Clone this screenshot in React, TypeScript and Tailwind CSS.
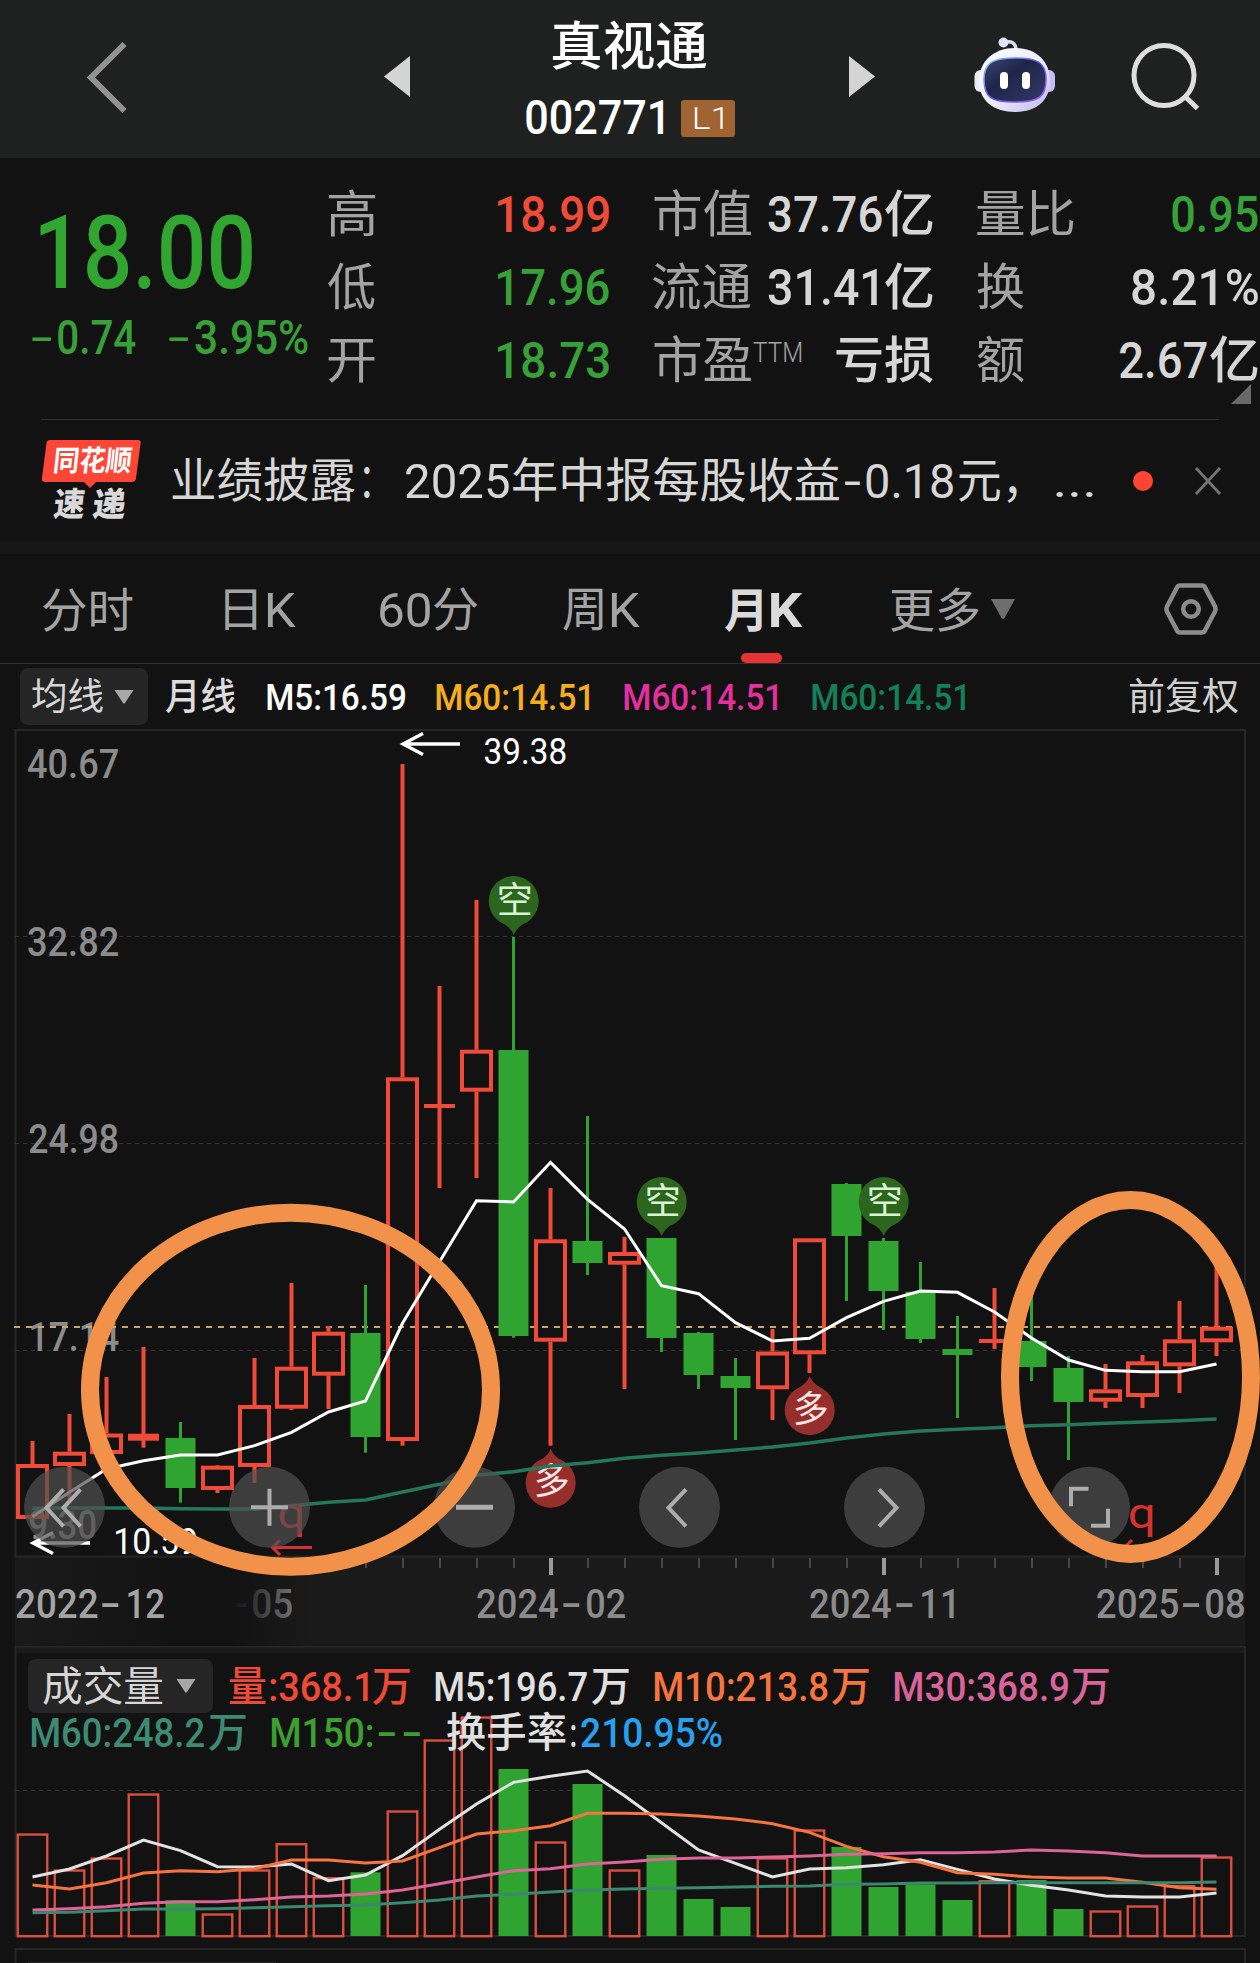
import { useLayoutEffect, useRef, useState, type ReactNode } from "react";

const FAMILY = 'Roboto, "Noto Sans CJK SC", sans-serif';
const RED = "#f04b39";
const GREEN = "#30a430";

/* ---------- text helpers ---------- */

let ctx: CanvasRenderingContext2D | null = null;
function inkOf(text: string, font: string) {
  if (!ctx) ctx = document.createElement("canvas").getContext("2d");
  if (!ctx) return { left: 0, width: 1 };
  ctx.font = font;
  const m = ctx.measureText(text);
  return {
    left: m.actualBoundingBoxLeft,
    width: m.actualBoundingBoxLeft + m.actualBoundingBoxRight,
  };
}

/** A run of text whose glyphs are condensed or widened to fill its box. */
function Fit({ children, className }: { children: string; className: string }) {
  const ref = useRef<HTMLSpanElement>(null);
  const [transform, setTransform] = useState("none");
  useLayoutEffect(() => {
    const el = ref.current;
    if (!el) return;
    const cs = getComputedStyle(el);
    const ink = inkOf(children, `${cs.fontWeight} ${cs.fontSize} ${cs.fontFamily}`);
    const s = parseFloat(cs.width) / ink.width;
    setTransform(`translateX(${ink.left * s}px) scaleX(${s})`);
  }, [children]);
  return (
    <span ref={ref} className={`block shrink-0 leading-none ${className}`}>
      <span className="block w-max origin-left whitespace-nowrap" style={{ transform }}>
        {children}
      </span>
    </span>
  );
}

type LabelProps = {
  x: number;
  cy: number;
  w: number;
  size: number;
  fill: string;
  weight?: number;
  children: string;
};

/** Chart label: ink starts at x, is w wide, and its digits are centred on cy. */
function Label({ x, cy, w, size, fill, weight = 500, children }: LabelProps) {
  const ink = inkOf(children, `${weight} ${size}px ${FAMILY}`);
  const s = w / ink.width;
  return (
    <text
      transform={`translate(${x + ink.left * s} ${cy + size * 0.3555}) scale(${s} 1)`}
      fontFamily={FAMILY}
      fontSize={size}
      fontWeight={weight}
      fill={fill}
    >
      {children}
    </text>
  );
}

/* ---------- header ---------- */

function Robot() {
  return (
    <svg className="h-[76px] w-[82px]" viewBox="0 0 82 76">
      <defs>
        <linearGradient id="shell" x1="0" y1="0" x2="1" y2="1">
          <stop offset="0" stopColor="#ffffff" />
          <stop offset="0.55" stopColor="#eeecfa" />
          <stop offset="1" stopColor="#b9b6ea" />
        </linearGradient>
        <linearGradient id="rim" x1="0" y1="0" x2="1" y2="1">
          <stop offset="0" stopColor="#7fd8f5" />
          <stop offset="0.5" stopColor="#5a4fd8" />
          <stop offset="1" stopColor="#a55cf0" />
        </linearGradient>
        <linearGradient id="visor" x1="0" y1="0" x2="1" y2="1">
          <stop offset="0" stopColor="#3f456e" />
          <stop offset="0.4" stopColor="#1f2549" />
          <stop offset="1" stopColor="#323a66" />
        </linearGradient>
      </defs>
      <path d="M30 6 C37 3 42 6 42 13" fill="none" stroke="#dcd9f2" strokeWidth="3.5" />
      <circle cx="29.5" cy="5.5" r="5" fill="#e6e4f7" />
      <rect x="0.5" y="33" width="12" height="22" rx="6" fill="#e9e7f8" />
      <rect x="69" y="33" width="12" height="22" rx="6" fill="#c3bfee" />
      <path
        d="M41 11 C62 11 76 24 76 44 C76 64 62 75 41 75 C20 75 5 64 5 44 C5 24 20 11 41 11Z"
        fill="url(#shell)"
      />
      <path
        d="M41 21 C62 21 72 25 72 42 C72 60 65 65 41 65 C17 65 10 60 10 42 C10 25 20 21 41 21Z"
        fill="url(#visor)"
        stroke="url(#rim)"
        strokeWidth="1.6"
      />
      <rect x="26" y="35" width="8" height="17" rx="4" fill="#fff" />
      <rect x="48" y="35" width="8" height="17" rx="4" fill="#fff" />
    </svg>
  );
}

function Header() {
  return (
    <header className="flex h-[158px] bg-[#1f2120]">
      <svg className="mt-[38px] ml-[82px] h-20 w-12" viewBox="0 0 48 80" fill="none">
        <path d="M42.500 6 L9 39.500 L42.500 73" stroke="#929292" strokeWidth="6" />
      </svg>
      <svg className="mt-14 ml-[254px] h-[41px] w-[26px]" viewBox="0 0 26 41">
        <path d="M26 0 V41 L0 20.500Z" fill="#d4d4d4" />
      </svg>
      <div className="ml-[116px] w-[210px] text-white">
        <Fit className="mt-[22px] ml-[26px] w-[155px] text-[52px] font-medium">真视通</Fit>
        <div className="mt-[20px] flex items-center">
          <Fit className="w-[137px] text-[48px] font-medium">002771</Fit>
          <div className="ml-[18px] flex h-[37px] w-[54px] items-center justify-center rounded-[3px] bg-[#a06432]">
            <Fit className="w-[29px] text-[31px] font-light">L1</Fit>
          </div>
        </div>
      </div>
      <svg className="mt-14 ml-[113px] h-[41px] w-[26px]" viewBox="0 0 26 41">
        <path d="M0 0 V41 L26 20.500Z" fill="#d4d4d4" />
      </svg>
      <div className="mt-[37px] ml-[99px]">
        <Robot />
      </div>
      <svg className="mt-[38px] ml-[70px] h-20 w-20" viewBox="1126 38 80 80" fill="none">
        <g stroke="#dedede" strokeWidth="5">
          <circle cx="1164" cy="75.500" r="30" />
          <path d="M1185 96.500 L1197.500 108.500" />
        </g>
      </svg>
    </header>
  );
}

/* ---------- quote ---------- */

function Quote() {
  const label = "text-[50px] text-[#a3a3a3] font-normal";
  return (
    <section className="relative flex h-[261px] bg-[#121212]">
      <div className="w-[327px] text-[#30a530]">
        <Fit className="mt-[44px] ml-10 w-[212px] text-[102px] font-medium">18.00</Fit>
        <div className="mt-[10px] ml-[31px] flex text-[48px] font-medium text-[#38a038]">
          <Fit className="w-[21px] font-normal">-</Fit>
          <Fit className="ml-[6px] w-[78px]">0.74</Fit>
          <Fit className="ml-[32px] w-[21px] font-normal">-</Fit>
          <Fit className="ml-[6px] w-[113px]">3.95%</Fit>
        </div>
      </div>
      <div className="mt-5 grid h-[220px] grid-cols-[171px_156px_114px_209px_281px] grid-rows-3 items-center text-[50px] font-medium text-[#d6d6d6]">
        <Fit className={`ml-px w-[47px] ${label}`}>高</Fit>
        <Fit className="w-[111px] text-[#f04b39]">18.99</Fit>
        <Fit className={`w-[97px] ${label}`}>市值</Fit>
        <div className="flex">
          <Fit className="w-[114px]">37.76</Fit>
          <Fit className="ml-[3px] w-[48px]">亿</Fit>
        </div>
        <div className="flex justify-between">
          <Fit className={`w-[97px] ${label}`}>量比</Fit>
          <Fit className="w-[86px] text-[#38a038]">0.95</Fit>
        </div>

        <Fit className={`ml-px w-[47px] ${label}`}>低</Fit>
        <Fit className="w-[111px] text-[#38a038]">17.96</Fit>
        <Fit className={`-ml-px w-[98px] ${label}`}>流通</Fit>
        <div className="flex">
          <Fit className="w-[109px]">31.41</Fit>
          <Fit className="ml-[8px] w-[48px]">亿</Fit>
        </div>
        <div className="flex justify-between">
          <Fit className={`w-[47px] ${label}`}>换</Fit>
          <Fit className="w-[126px]">8.21%</Fit>
        </div>

        <Fit className={`ml-px w-[47px] ${label}`}>开</Fit>
        <Fit className="w-[111px] text-[#38a038]">18.73</Fit>
        <div className="flex">
          <Fit className={`w-[97px] ${label}`}>市盈</Fit>
          <Fit className="mt-[4px] ml-[2px] w-[48px] text-[27px] font-light text-[#a3a3a3]">TTM</Fit>
        </div>
        <Fit className="ml-[68px] w-[97px]">亏损</Fit>
        <div className="flex justify-between">
          <Fit className={`w-[47px] ${label}`}>额</Fit>
          <div className="flex">
            <Fit className="w-[87px]">2.67</Fit>
            <Fit className="ml-[3px] w-[48px]">亿</Fit>
          </div>
        </div>
      </div>
      <svg className="absolute right-[9px] bottom-[15px] h-5 w-5" viewBox="0 0 20 20">
        <path d="M20 0 V20 H0Z" fill="#696969" />
      </svg>
    </section>
  );
}

/* ---------- news strip ---------- */

function News() {
  return (
    <section className="flex h-[122px] bg-[#121212]">
      <div className="mx-[41px] flex w-[1178px] items-center border-t border-[#303030]">
        <div className="relative mb-[2px] h-[82px] w-[100px] shrink-0">
          <svg className="absolute inset-0 h-[82px] w-[100px]" viewBox="0 0 100 82">
            <path
              d="M9 1 H97 Q100 1 99.600 4 L95 39 Q94.500 43 91 43 H55 L49 49 L43 43 H4 Q0.500 43 1 39 L5.500 4 Q6 1 9 1Z"
              fill="#fd4636"
            />
          </svg>
          <Fit className="absolute top-[8px] left-[14px] w-[76px] -skew-x-6 text-[29px] font-bold text-white">
            同花顺
          </Fit>
          <Fit className="absolute top-[49px] left-[13px] w-[31px] -skew-x-6 text-[33px] font-black text-[#d8d8d8]">
            速
          </Fit>
          <Fit className="absolute top-[49px] left-[52px] w-[33px] -skew-x-6 text-[33px] font-black text-[#d8d8d8]">
            递
          </Fit>
        </div>
        <div className="mt-[2px] ml-[31px] flex text-[47px] font-normal text-[#d6d6d6]">
          <Fit className="w-[183px]">业绩披露</Fit>
          <Fit className="ml-[9px] w-[6px]">：</Fit>
          <Fit className="ml-[36px] w-[103px] text-[49px]">2025</Fit>
          <Fit className="ml-[4px] w-[326px]">年中报每股收益</Fit>
          <Fit className="ml-[5px] w-[17px]">-</Fit>
          <Fit className="ml-[5px] w-[87px] text-[49px]">0.18</Fit>
          <Fit className="ml-[6px] w-[58px]">元，</Fit>
          <Fit className="ml-[39px] w-[37px]">...</Fit>
        </div>
        <div className="ml-[40px] size-5 shrink-0 rounded-full bg-[#ff4532]" />
        <svg className="ml-[41px] size-7 shrink-0" viewBox="0 0 28 28">
          <path d="M2 1 L26 27 M26 1 L2 27" stroke="#747474" strokeWidth="2.800" />
        </svg>
      </div>
    </section>
  );
}

/* ---------- period tabs ---------- */

function Tabs() {
  return (
    <nav className="flex h-[110px] items-center border-b border-[#303030] bg-[#121212] pt-[3px] text-[47px] font-normal text-[#a3a3a3]">
      <Fit className="ml-[43px] w-[90px]">分时</Fit>
      <div className="ml-[92px] flex">
        <Fit className="w-[32px]">日</Fit>
        <Fit className="ml-[11px] w-[28px] text-[49px]">K</Fit>
      </div>
      <div className="ml-[84px] flex">
        <Fit className="w-[50px] text-[49px]">60</Fit>
        <Fit className="ml-[4px] w-[44px]">分</Fit>
      </div>
      <div className="ml-[85px] flex">
        <Fit className="w-[40px]">周</Fit>
        <Fit className="ml-[9px] w-[28px] text-[49px]">K</Fit>
      </div>
      <div className="relative ml-[84px] flex h-full items-center font-bold text-[#dadada]">
        <Fit className="w-[38px]">月</Fit>
        <Fit className="ml-[9px] w-[32px] text-[49px]">K</Fit>
        <div className="absolute bottom-0 left-[17px] h-[10px] w-[41px] rounded-[5px] bg-[#e63434]" />
      </div>
      <Fit className="ml-[88px] w-[88px]">更多</Fit>
      <svg className="mb-[3px] ml-[11px] h-5 w-[26px]" viewBox="0 0 26 20">
        <path d="M1 0 H25 L14.500 19 Q13 21 11.500 19Z" fill="#6e6e6e" />
      </svg>
      <svg
        className="mb-[3px] ml-[148px] h-[52px] w-[54px]"
        viewBox="0 0 54 52"
        fill="none"
        stroke="#8c8c8c"
        strokeWidth="4.500"
      >
        <path
          d="M16 2.500 H38 Q40 2.500 41 4.500 L51 23.500 Q52 26 51 28.500 L41 47.500 Q40 49.500 38 49.500 H16 Q14 49.500 13 47.500 L3 28.500 Q2 26 3 23.500 L13 4.500 Q14 2.500 16 2.500Z"
          strokeLinejoin="round"
        />
        <circle cx="27" cy="26" r="7.800" />
      </svg>
    </nav>
  );
}

function Caret() {
  return (
    <svg className="h-[14px] w-5" viewBox="0 0 20 14">
      <path d="M0.500 0 H19.500 L11 13 Q10 14.500 9 13Z" fill="#a8a8a8" />
    </svg>
  );
}

function PriceLegend() {
  return (
    <div className="flex h-[65px] items-center bg-[#121212] text-[37px] font-medium">
      <div className="ml-5 flex h-[57px] w-[128px] items-center rounded-lg bg-[#252525] font-normal text-[#d6d6d6]">
        <Fit className="mt-[2px] ml-3 w-[71px]">均线</Fit>
        <div className="ml-[11px]">
          <Caret />
        </div>
      </div>
      <div className="flex pt-[2px]">
        <Fit className="ml-[17px] w-[70px] text-[#dcdcdc]">月线</Fit>
        <Fit className="ml-[32px] w-[138px] text-white">M5:16.59</Fit>
        <Fit className="ml-[31px] w-[153px] text-[#f5ae1e]">M60:14.51</Fit>
        <Fit className="ml-[35px] w-[153px] text-[#e2309f]">M60:14.51</Fit>
        <Fit className="ml-[35px] w-[153px] text-[#14805a]">M60:14.51</Fit>
        <Fit className="ml-[164px] w-[109px] font-normal text-[#d0d0d0]">前复权</Fit>
      </div>
    </div>
  );
}

/* ---------- price chart ---------- */

const cx = (i: number) => 32.5 + 37 * i;

type Candle = ["r" | "g" | "x", number, number, number, number];
// kind, high, body top, body bottom, low
const candles: Candle[] = [
  ["r", 1441, 1464, 1519, 1519],
  ["r", 1414, 1451.7, 1466, 1500],
  ["r", 1377, 1433.5, 1454, 1454],
  ["x", 1347, 1433.7, 1440.7, 1447.7],
  ["g", 1422, 1438, 1488, 1502.7],
  ["r", 1465, 1465.7, 1490, 1493],
  ["r", 1358, 1405, 1467, 1483],
  ["r", 1283, 1366.7, 1408.7, 1410],
  ["r", 1326, 1331.7, 1375.7, 1409],
  ["g", 1285, 1333, 1437, 1452.7],
  ["r", 764, 1077.3, 1441, 1445.7],
  ["x", 986, 1104, 1108, 1188],
  ["r", 900, 1049.7, 1091.7, 1178],
  ["g", 937, 1050, 1336, 1337.7],
  ["r", 1188, 1239.3, 1341.7, 1445.7],
  ["g", 1116, 1241, 1263, 1275],
  ["r", 1237, 1252, 1264.7, 1389],
  ["g", 1238, 1238, 1338, 1352],
  ["g", 1332, 1333, 1375, 1389],
  ["g", 1358, 1376, 1388, 1440],
  ["r", 1329, 1351.5, 1389.3, 1420],
  ["r", 1239, 1238.3, 1354.3, 1373],
  ["g", 1183, 1184, 1236, 1301],
  ["g", 1238, 1241, 1291, 1330],
  ["g", 1262, 1291.7, 1339, 1343],
  ["g", 1316, 1349, 1355, 1418],
  ["x", 1288, 1339, 1343, 1349],
  ["g", 1285, 1341, 1367, 1381],
  ["g", 1356, 1368, 1402, 1460],
  ["r", 1364, 1389.3, 1401.7, 1408],
  ["r", 1355, 1361.3, 1397, 1408],
  ["r", 1301, 1339.3, 1366.3, 1393],
  ["r", 1265, 1326.7, 1342.3, 1356],
];

const ma5 = [
  1130, 1057, 987, 962, 945, 945, 917, 877, 816, 783, 550, 365, 182, 186, 67, 178, 267, 437, 461, 548, 603,
  595, 533, 484, 453, 457, 516, 594, 660, 691, 695, 695, 672,
].map((v) => 1140 + v / 3);

const ma60 = [
  1105, 1104, 1104, 1104, 1106, 1107, 1107, 1097, 1087, 1080, 1056, 1033, 1006, 995, 978, 968, 955, 946, 939,
  930, 921, 909, 894, 882, 873, 868, 863, 857, 854, 850, 846, 842, 837,
].map((v) => 1140 + v / 3);

const line = (ys: number[]) => ys.map((y, i) => `${cx(i)},${y}`).join(" ");

function CandleShape({ i, c }: { i: number; c: Candle }) {
  const [kind, hi, top, bot, lo] = c;
  const x = cx(i);
  if (kind === "g")
    return (
      <g fill={GREEN}>
        <rect x={x - 1.5} y={hi} width={3} height={lo - hi} />
        <rect x={x - 15} y={top} width={30} height={bot - top} />
      </g>
    );
  if (kind === "x")
    return (
      <g fill={RED}>
        <rect x={x - 2} y={hi} width={4} height={lo - hi} />
        <rect x={x - 15.5} y={top} width={31} height={bot - top} />
      </g>
    );
  return (
    <g fill={RED}>
      {top > hi && <rect x={x - 2} y={hi} width={4} height={top - hi} />}
      {lo > bot && <rect x={x - 2} y={bot} width={4} height={lo - bot} />}
      <rect x={x - 14.5} y={top + 2} width={29} height={bot - top - 4} fill="none" stroke={RED} strokeWidth={4} />
    </g>
  );
}

function Pin({ x, y, up, fill, ch }: { x: number; y: number; up?: boolean; fill: string; ch: string }) {
  const d = up
    ? `M${x - 13} ${y - 21} Q${x - 3} ${y - 26} ${x} ${y - 34} Q${x + 3} ${y - 26} ${x + 13} ${y - 21}Z`
    : `M${x - 13} ${y + 21} Q${x - 3} ${y + 26} ${x} ${y + 34} Q${x + 3} ${y + 26} ${x + 13} ${y + 21}Z`;
  return (
    <g>
      <circle cx={x} cy={y} r={25} fill={fill} />
      <path d={d} fill={fill} />
      <text
        x={x + 1}
        y={y + 11.5}
        textAnchor="middle"
        fontSize={36}
        fontFamily={FAMILY}
        fill={up ? "#fbe6e6" : "#d9f3d4"}
      >
        {ch}
      </text>
    </g>
  );
}

function RoundButton({ x, children }: { x: number; children: ReactNode }) {
  return (
    <g transform={`translate(${x} 1507.300)`}>
      <circle r={40.5} fill="#505050" fillOpacity={0.7} />
      <g fill="none" stroke="#adadad" strokeWidth={4}>
        {children}
      </g>
    </g>
  );
}

function DateLabel({
  x,
  year,
  month,
  mx,
  mw,
  fill,
}: {
  x: number;
  year: string;
  month: string;
  mx: number;
  mw: number;
  fill: string;
}) {
  return (
    <g>
      <Label x={x} cy={1603.5} w={81.5} size={41} fill={fill}>{year}</Label>
      <Label x={x + 85.5} cy={1603.5} w={18} size={41} fill={fill}>-</Label>
      <Label x={mx} cy={1603.5} w={mw} size={41} fill={fill}>{month}</Label>
    </g>
  );
}

function PriceChart() {
  const grey = "#8b8b8b";
  return (
    <svg className="block h-[917px] w-[1260px]" viewBox="0 729 1260 917">
      <defs>
        <linearGradient id="fade" x1="15" x2="310" y1="0" y2="0" gradientUnits="userSpaceOnUse">
          <stop offset="0" stopColor="#121212" stopOpacity="0" />
          <stop offset="0.58" stopColor="#121212" />
          <stop offset="0.74" stopColor="#121212" />
          <stop offset="1" stopColor="#121212" stopOpacity="0" />
        </linearGradient>
      </defs>
      <rect x="15" y="1557" width="1230" height="90" fill="#1a1a1a" />
      <path d="M15.500 1557 V730 H1245 V1557" fill="none" stroke="#272727" strokeWidth="2" />
      <path d="M15 1556.500 H1245" stroke="#242424" strokeWidth="2" />
      <path d="M15 936.500 H1245 M15 1143.500 H1245 M15 1350.500 H1245" stroke="#343434" strokeDasharray="4 4" />

      <Label x={28} cy={763.5} w={90} size={41} fill={grey}>40.67</Label>
      <Label x={28} cy={941.5} w={90} size={41} fill={grey}>32.82</Label>
      <Label x={29} cy={1138.5} w={89} size={41} fill={grey}>24.98</Label>
      <Label x={31} cy={1336.5} w={88} size={41} fill={grey}>17.14</Label>
      <Label x={29} cy={1524} w={67} size={41} fill={grey}>9.30</Label>
      <path d="M14 1327 H1245" stroke="#c4a76a" strokeWidth="2" strokeDasharray="6 6" />

      {candles.map((c, i) => (
        <CandleShape key={i} i={i} c={c} />
      ))}

      <Pin x={513.7} y={901} fill="#2c651e" ch="空" />
      <Pin x={661.7} y={1202} fill="#2c651e" ch="空" />
      <Pin x={883.7} y={1202} fill="#2c651e" ch="空" />
      <Pin x={550.7} y={1482.7} up fill="#962e2c" ch="多" />
      <Pin x={809.7} y={1410} up fill="#962e2c" ch="多" />

      <polyline points={line(ma60)} fill="none" stroke="#25775a" strokeWidth="3.500" />
      <polyline points={line(ma5)} fill="none" stroke="#fff" strokeWidth="3" />

      <g fill="none" stroke="#fff" strokeWidth="3.300">
        <path d="M460 744 H403 M423 733.500 L403 744 L423 754.500" />
        <path d="M90 1543 H33 M53 1532.500 L33 1543 L53 1553.500" />
      </g>
      <Label x={484.5} cy={751.5} w={81.5} size={36} weight={400} fill="#fff">39.38</Label>
      <Label x={116} cy={1540.8} w={80} size={36} weight={400} fill="#fff">10.59</Label>

      <g fill="none" stroke="#d23232" strokeWidth="3">
        <path d="M312 1547.500 H273 M280 1540 L272.500 1547.500 L280 1555" />
        <path d="M1164 1547.500 H1125 M1132 1540 L1124.500 1547.500 L1132 1555" />
      </g>
      <Label x={279.5} cy={1512.5} w={23} size={43} weight={400} fill="#d83131">q</Label>
      <Label x={1130} cy={1512.5} w={23} size={43} weight={400} fill="#d83131">q</Label>

      <RoundButton x={64.5}>
        <path d="M-1 -18 L-18 0.500 L-1 19 M16 -18 L-1 0.500 L16 19" />
      </RoundButton>
      <RoundButton x={269.5}>
        <path d="M-18.500 0 H18.500 M0 -18.500 V18.500" />
      </RoundButton>
      <RoundButton x={474.5}>
        <path d="M-18.500 0 H18.500" strokeWidth={5} />
      </RoundButton>
      <RoundButton x={679.5}>
        <path d="M6.500 -18 L-11 0.500 L6.500 19" />
      </RoundButton>
      <RoundButton x={884.5}>
        <path d="M-5.500 -18 L12 0.500 L-5.500 19" />
      </RoundButton>
      <RoundButton x={1089.5}>
        <path d="M-18.500 -1 V-18.500 H-1 M18.500 1.500 V18.500 H1.500" />
      </RoundButton>

      {candles.map((_, i) =>
        i < 9 ? null : i === 14 || i === 23 || i === 32 ? (
          <rect key={i} x={cx(i) - 1.5} y={1558} width={4} height={17} fill="#9a9a9a" />
        ) : (
          <rect key={i} x={cx(i) - 0.5} y={1558} width={2} height={10} fill="#474747" />
        ),
      )}

      <Label x={231} cy={1603.5} w={16} size={41} fill={grey}>-</Label>
      <Label x={253} cy={1603.5} w={39} size={41} fill={grey}>05</Label>
      <rect x="15" y="1558" width="295" height="95" fill="url(#fade)" />
      <DateLabel x={16} year="2022" month="12" mx={128} mw={36} fill="#a3a3a3" />
      <DateLabel x={477} year="2024" month="02" mx={587} mw={38} fill={grey} />
      <DateLabel x={810} year="2024" month="11" mx={922} mw={32} fill={grey} />
      <DateLabel x={1096.7} year="2025" month="08" mx={1206} mw={38.5} fill={grey} />

      <g fill="none" stroke="#f2924a" strokeWidth="18">
        <ellipse cx="290.500" cy="1389.700" rx="200.500" ry="177" />
        <ellipse cx="1130.500" cy="1377" rx="120.500" ry="177" />
      </g>
    </svg>
  );
}

/* ---------- volume chart ---------- */

const volumes: ["r" | "g", number][] = [
  ["r", 580], ["r", 688], ["r", 652], ["r", 460], ["g", 781], ["r", 820], ["r", 688], ["r", 609], ["r", 711],
  ["g", 697], ["r", 511], ["r", 298], ["r", 229], ["g", 387], ["r", 604], ["g", 432], ["r", 688], ["g", 645],
  ["g", 777], ["g", 801], ["r", 652], ["r", 568], ["g", 621], ["g", 741], ["g", 733], ["g", 780], ["r", 720],
  ["g", 720], ["g", 807], ["r", 811], ["r", 796], ["r", 735], ["r", 649],
];

const volumeLines: [string, number[]][] = [
  ["#e2e2e2", [711, 687, 648, 600, 632, 680, 681, 672, 722, 705, 647, 568, 492, 427, 409, 393, 467, 548, 630, 670, 711, 687, 683, 674, 659, 688, 717, 736, 750, 768, 771, 771, 759]],
  ["#f57440", [735, 747, 728, 699, 692, 695, 686, 660, 660, 669, 663, 623, 582, 572, 557, 520, 520, 522, 528, 537, 551, 577, 619, 650, 667, 698, 703, 711, 714, 714, 727, 743, 748]],
  ["#dc6496", [810, 806, 800, 790, 785, 785, 779, 771, 768, 762, 750, 731, 711, 692, 686, 672, 666, 658, 654, 654, 651, 648, 643, 641, 638, 638, 636, 630, 633, 638, 648, 648, 648]],
  ["#3c8770", [818, 817, 812, 807, 807, 806, 803, 800, 797, 795, 788, 780, 768, 763, 756, 750, 747, 745, 743, 741, 739, 738, 733, 732, 729, 729, 728, 728, 728, 728, 728, 728, 726]],
];

function VolumeChart() {
  return (
    <svg className="absolute inset-0 h-[317px] w-[1260px]" viewBox="0 1646 1260 317">
      <rect x="15" y="1646" width="1230" height="7" fill="#1a1a1a" />
      <path d="M15.500 1936 V1646.500 H1245 V1936Z" fill="none" stroke="#262626" strokeWidth="2" />
      <path d="M15 1790.500 H1245" stroke="#343434" strokeDasharray="4 4" />
      {volumes.map(([kind, v], i) => {
        const y = 1640 + v / 3;
        return kind === "g" ? (
          <rect key={i} x={cx(i) - 15} y={y} width={30} height={1936 - y} fill={GREEN} />
        ) : (
          <rect
            key={i}
            x={cx(i) - 14.75}
            y={y + 1.2}
            width={29.5}
            height={1935 - y}
            fill="none"
            stroke="#dc4f3e"
            strokeWidth={2.4}
          />
        );
      })}
      {volumeLines.map(([color, ys]) => (
        <polyline
          key={color}
          points={line(ys.map((v) => 1640 + v / 3))}
          fill="none"
          stroke={color}
          strokeWidth="3"
        />
      ))}
      <path d="M15.500 1963 V1949 H1245 V1963" fill="none" stroke="#262626" strokeWidth="2" />
      <rect x="28" y="1962" width="248" height="1" fill="#252525" />
    </svg>
  );
}

function Volume() {
  return (
    <section className="relative h-[317px] bg-[#121212]">
      <VolumeChart />
      <div className="relative pt-[13px] text-[41px] font-medium">
        <div className="flex h-[54px] items-center">
          <div className="ml-7 flex h-[54px] w-[185px] items-center rounded-lg bg-[#252525] font-normal text-[#d6d6d6]">
            <Fit className="mt-[2px] ml-[15px] w-[120px]">成交量</Fit>
            <div className="ml-[13px]">
              <Caret />
            </div>
          </div>
          <div className="ml-4 flex pt-[2px] text-[#ee4a38]">
            <Fit className="w-[37px]">量</Fit>
            <Fit className="ml-[4px] w-[98px]">:368.1</Fit>
            <Fit className="ml-[5px] w-[37px]">万</Fit>
          </div>
          <div className="ml-[25px] flex pt-[2px] text-[#e0e0e0]">
            <Fit className="w-[152px]">M5:196.7</Fit>
            <Fit className="ml-[5px] w-[37px]">万</Fit>
          </div>
          <div className="ml-[25px] flex pt-[2px] text-[#f57440]">
            <Fit className="w-[174px]">M10:213.8</Fit>
            <Fit className="ml-[4px] w-[37px]">万</Fit>
          </div>
          <div className="ml-[25px] flex pt-[2px] text-[#d9649a]">
            <Fit className="w-[174px]">M30:368.9</Fit>
            <Fit className="ml-[4px] w-[37px]">万</Fit>
          </div>
        </div>
        <div className="flex h-[41px] items-center">
          <div className="ml-[31px] flex text-[#3f8a72]">
            <Fit className="w-[173px]">M60:248.2</Fit>
            <Fit className="ml-[5px] w-[37px]">万</Fit>
          </div>
          <div className="ml-[25px] flex text-[#3c9f2f]">
            <Fit className="w-[102px]">M150:</Fit>
            <Fit className="ml-[5px] w-[18px]">-</Fit>
            <Fit className="ml-[7px] w-[18px]">-</Fit>
          </div>
          <div className="ml-[26px] flex text-[#e0e0e0]">
            <Fit className="w-[119px]">换手率</Fit>
            <Fit className="ml-[5px] w-[5px]">:</Fit>
          </div>
          <Fit className="ml-[5px] w-[141px] text-[#28a0f0]">210.95%</Fit>
        </div>
      </div>
    </section>
  );
}

export default function App() {
  return (
    <main className="h-[1963px] w-[1260px] overflow-hidden bg-[#121212] font-[Roboto,'Noto_Sans_CJK_SC',sans-serif]">
      <Header />
      <Quote />
      <News />
      <div className="h-[13px] bg-[#171717]" />
      <Tabs />
      <PriceLegend />
      <PriceChart />
      <Volume />
    </main>
  );
}
